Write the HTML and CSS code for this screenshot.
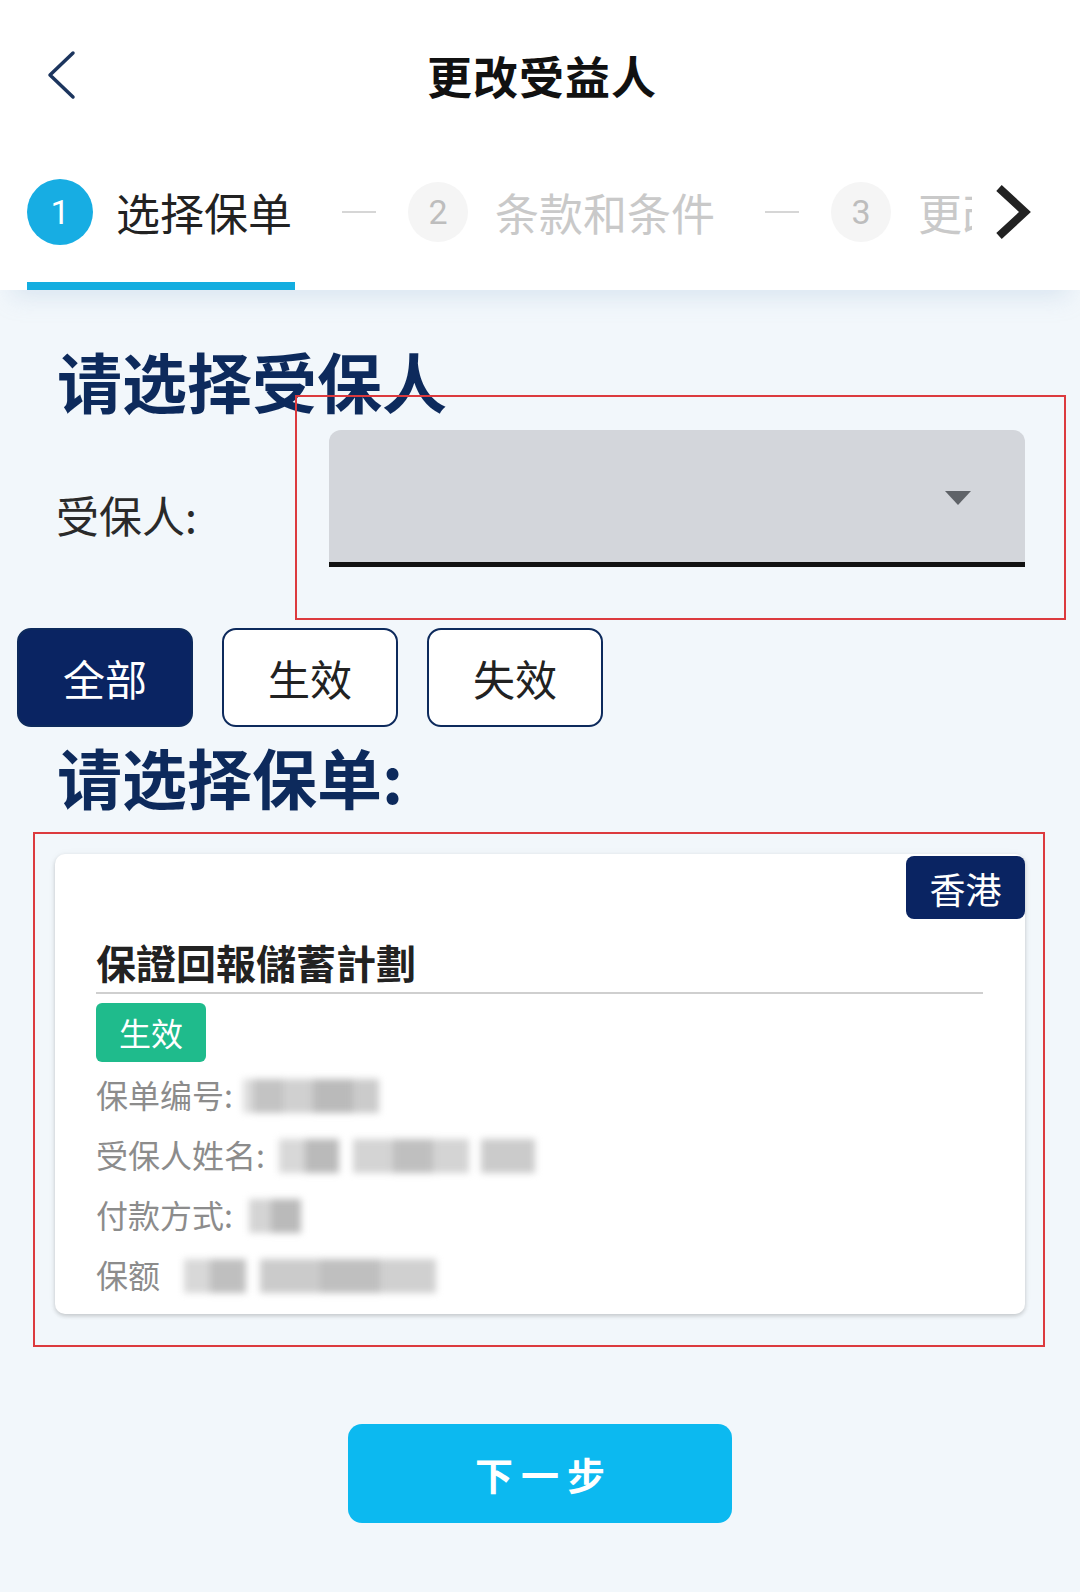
FILE: index.html
```html
<!DOCTYPE html>
<html lang="zh-CN">
<head>
<meta charset="utf-8">
<title>更改受益人</title>
<link rel="stylesheet" href="styles.css">
</head>
<body>
<div class="page">
  <header class="topbar">
    <div class="back">
      <svg width="30" height="50" viewBox="0 0 30 50"><polyline points="26,3 3,25 26,47" fill="none" stroke="#1c355e" stroke-width="3.5" stroke-linecap="round" stroke-linejoin="round"/></svg>
    </div>
    <h1 class="title">更改受益人</h1>
    <div class="spacer"></div>
  </header>

  <nav class="tabs">
    <div class="steps">
      <div class="track">
        <div class="step active"><span class="num">1</span><span class="label">选择保单</span></div>
        <span class="dash"></span>
        <div class="step"><span class="num">2</span><span class="label">条款和条件</span></div>
        <span class="dash"></span>
        <div class="step"><span class="num">3</span><span class="label">更改</span></div>
      </div>
      <svg class="next-arrow" width="40" height="56" viewBox="0 0 40 56"><polyline points="6,4 32,28 6,52" fill="none" stroke="#222" stroke-width="8" stroke-linejoin="miter"/></svg>
    </div>
    <div class="underline"></div>
  </nav>

  <main class="main">
    <h2 class="heading">请选择受保人</h2>
    <div class="field">
      <label class="field-label">受保人:</label>
      <div class="select">
        <svg class="caret" width="26" height="14" viewBox="0 0 26 14"><polygon points="0,0 26,0 13,14" fill="#5f6368"/></svg>
      </div>
    </div>

    <div class="filters">
      <button class="filter on">全部</button>
      <button class="filter">生效</button>
      <button class="filter">失效</button>
    </div>

    <h2 class="heading h2b">请选择保单:</h2>

    <section class="card">
      <span class="region">香港</span>
      <h3 class="card-title">保證回報儲蓄計劃</h3>
      <span class="status">生效</span>
      <div class="row"><span class="k">保单编号:</span>
        <span class="mosaic m1"><i class="b" style="width:10px;opacity:.4"></i><i class="b" style="width:30px;opacity:.7"></i><i class="b" style="width:30px;opacity:.55"></i><i class="b" style="width:40px;opacity:.8"></i><i class="b" style="width:26px;opacity:.6"></i></span>
      </div>
      <div class="row"><span class="k">受保人姓名:</span>
        <span class="mosaic m2"><i class="b" style="width:26px;opacity:.45"></i><i class="b" style="width:34px;opacity:.8"></i><i class="gap" style="width:14px"></i><i class="b" style="width:40px;opacity:.5"></i><i class="b" style="width:40px;opacity:.75"></i><i class="b" style="width:36px;opacity:.5"></i><i class="gap" style="width:12px"></i><i class="b" style="width:54px;opacity:.6"></i></span>
      </div>
      <div class="row"><span class="k">付款方式:</span>
        <span class="mosaic m3"><i class="b" style="width:22px;opacity:.5"></i><i class="b" style="width:30px;opacity:.8"></i></span>
      </div>
      <div class="row"><span class="k">保额</span>
        <span class="mosaic m4"><i class="b" style="width:26px;opacity:.45"></i><i class="b" style="width:36px;opacity:.75"></i><i class="gap" style="width:14px"></i><i class="b" style="width:60px;opacity:.6"></i><i class="b" style="width:60px;opacity:.75"></i><i class="b" style="width:56px;opacity:.55"></i></span>
      </div>
    </section>

    <div class="actions">
      <button class="primary">下一步</button>
    </div>
  </main>

  <div class="mark mark-a"></div>
  <div class="mark mark-b"></div>
</div>
</body>
</html>
```

FILE: styles.css
```css
* { box-sizing: border-box; }
html, body { margin: 0; padding: 0; }
body {
  width: 1080px;
  min-height: 1592px;
  background: #f2f7fb;
  font-family: "Noto Sans CJK SC", "Noto Sans", sans-serif;
  color: #222;
}
.page { position: relative; min-height: 1592px; }

.topbar {
  height: 150px;
  background: #fff;
  display: grid;
  grid-template-columns: 1fr auto 1fr;
  align-items: center;
}
.back { padding-left: 47px; display: flex; align-items: center; }
.title {
  margin: 0;
  font-size: 45px;
  font-weight: 700;
  color: #111;
  letter-spacing: 1px;
  line-height: 1;
  padding-left: 4px;
}

.tabs {
  background: #fff;
  height: 140px;
  box-shadow: 0 18px 22px -12px rgba(170, 195, 220, 0.35);
  position: relative;
  z-index: 1;
}
.steps { height: 132px; display: flex; align-items: center; padding-bottom: 8px; }
.track {
  width: 972px;
  overflow: hidden;
  display: flex;
  align-items: center;
  padding-left: 27px;
  white-space: nowrap;
  flex: none;
}
.step { display: flex; align-items: center; flex: none; }
.num {
  width: 60px; height: 60px;
  border-radius: 50%;
  background: #f5f5f5;
  color: #bdbdbd;
  font-family: "Roboto", "Noto Sans", sans-serif;
  font-size: 34px;
  display: flex; align-items: center; justify-content: center;
  margin-right: 27px;
  flex: none;
}
.step.active .num {
  width: 66px; height: 66px;
  background: #17ade3;
  color: #fff;
  margin-right: 23px;
}
.label { font-size: 44px; color: #c9c9c9; line-height: 1; }
.step.active .label { color: #222; }
.dash { width: 34px; height: 2px; background: #d6d6d6; margin: 0 32px 0 50px; flex: none; }
.next-arrow { margin-left: 21px; flex: none; }
.underline { width: 268px; height: 8px; margin-left: 27px; background: #13ade0; }

.main { padding-top: 49px; }
.heading {
  margin: 0 0 0 57px;
  font-size: 65px;
  line-height: 82px;
  font-weight: 700;
  color: #0d2a5c;
}
.field { display: flex; align-items: center; margin-top: 9px; }
.field-label { width: 329px; padding-left: 56px; padding-top: 30px; font-size: 43px; color: #2a2a2a; flex: none; }
.select {
  width: 696px;
  height: 137px;
  background: #d3d6db;
  border-radius: 12px 12px 0 0;
  border-bottom: 5px solid #121212;
  display: flex;
  align-items: center;
  justify-content: flex-end;
  padding-right: 54px;
}
.caret { margin-top: 4px; }

.filters { display: flex; gap: 29px; padding-left: 17px; margin-top: 61px; }
.filter {
  width: 176px; height: 99px;
  border-radius: 14px;
  border: 2px solid #0d2a5c;
  background: #fff;
  color: #222;
  font-family: inherit;
  font-size: 42px;
  padding: 0;
}
.filter.on { background: #0a2462; color: #fff; }

.h2b { margin-top: 8px; }

.card {
  position: relative;
  margin: 37px 55px 0 55px;
  height: 460px;
  background: #fff;
  border-radius: 10px;
  box-shadow: 0 2px 4px rgba(0,0,0,0.18), 0 0 8px rgba(0,0,0,0.04);
  padding: 82px 42px 10px 41px;
}
.region {
  position: absolute;
  top: 2px; right: 0;
  width: 119px; height: 63px;
  background: #0a2462;
  color: #fff;
  border-radius: 8px;
  font-size: 36px;
  display: flex; align-items: center; justify-content: center;
}
.card-title {
  margin: 0;
  font-size: 40px;
  line-height: 52px;
  font-weight: 700;
  color: #222;
  padding-bottom: 4px;
  border-bottom: 2px solid #cfcfcf;
}
.status {
  display: inline-block;
  margin-top: 9px;
  height: 59px;
  line-height: 59px;
  padding: 0 23px;
  background: #1fbb8c;
  color: #fff;
  border-radius: 6px;
  font-size: 32px;
}
.row { display: flex; align-items: center; height: 60px; font-size: 32px; color: #8c8c8c; }
.row:first-of-type { margin-top: 2px; }
.k { flex: none; }
.mosaic { display: flex; height: 34px; filter: blur(3.5px); margin-top: 4px; }
.mosaic .b { display: block; height: 100%; background: #a9a9a9; }
.mosaic .gap { display: block; height: 100%; }
.m1 { margin-left: 10px; }
.m2 { margin-left: 14px; }
.m3 { margin-left: 16px; }
.m4 { margin-left: 24px; }

.actions { display: flex; justify-content: center; margin-top: 110px; }
.primary {
  width: 384px; height: 99px;
  border: none;
  border-radius: 14px;
  background: #0cb9f0;
  color: #fff;
  font-family: inherit;
  font-size: 38px;
  font-weight: 700;
  letter-spacing: 8px;
  padding: 0 0 0 8px;
}

.mark { position: absolute; border: 2px solid #dc3a3e; pointer-events: none; z-index: 5; }
.mark-a { left: 295px; top: 395px; width: 771px; height: 225px; }
.mark-b { left: 33px; top: 832px; width: 1012px; height: 515px; }
```
